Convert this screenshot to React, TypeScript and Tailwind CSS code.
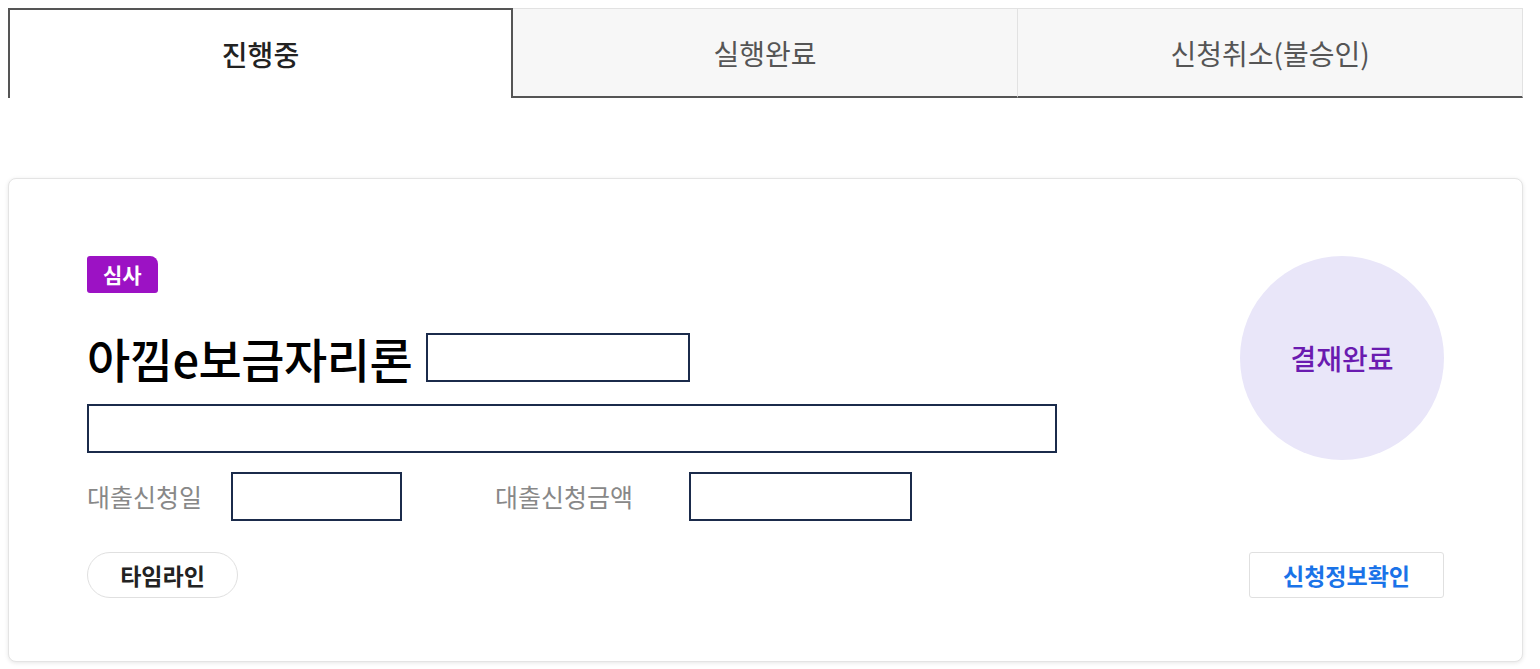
const font = "font-['Noto_Sans_CJK_KR','Noto_Sans',sans-serif]";

function Tabs() {
  return (
    <div className="grid grid-cols-3 h-[90px]">
      <div className="flex items-center justify-center border-2 border-b-0 border-[#555] bg-white text-[28px] font-medium text-[#222]">
        진행중
      </div>
      <div className="flex items-center justify-center border-t border-r border-[#e2e2e2] border-b-2 border-b-[#555] bg-[#f7f7f7] text-[28px] text-[#555]">
        실행완료
      </div>
      <div className="flex items-center justify-center border-t border-r border-[#e2e2e2] border-b-2 border-b-[#555] bg-[#f7f7f7] text-[28px] text-[#555]">
        신청취소(불승인)
      </div>
    </div>
  );
}

function Blank({ className }: { className: string }) {
  return <div className={`border-2 border-[#1b2b4b] bg-white ${className}`} />;
}

export default function App() {
  return (
    <div className={`${font} bg-white min-h-[669px] pl-2 pr-[17px] pt-2`}>
      <Tabs />

      <div className="mt-[80px] rounded-lg border border-[#e4e4e4] bg-white shadow-[0_1px_4px_rgba(0,0,0,0.10)] px-[78px] pt-[77px] pb-[63px]">
        <div className="flex justify-between">
          <div className="flex flex-col">
            <span className="self-start rounded-[3px] rounded-tr-lg bg-[#9c12c4] px-4 h-[37px] flex items-center text-[21px] font-bold text-white">
              심사
            </span>

            <div className="mt-[40px] flex items-center h-[49px] gap-[14px]">
              <h1 className="text-[47px] font-medium text-black leading-none tracking-[-0.5px]">
                아낌e보금자리론
              </h1>
              <Blank className="w-[264px] h-[49px]" />
            </div>

            <Blank className="mt-[22px] w-[970px] h-[49px]" />

            <div className="mt-[19px] flex items-center h-[49px] text-[25px] text-[#888]">
              <span className="w-[144px]">대출신청일</span>
              <Blank className="w-[171px] h-[49px]" />
              <span className="ml-[93px] w-[194px]">대출신청금액</span>
              <Blank className="w-[223px] h-[49px]" />
            </div>
          </div>

          <div className="w-[204px] h-[204px] rounded-full bg-[#e9e6f9] flex items-center justify-center text-[28px] font-medium text-[#6a1bb0]">
            결재완료
          </div>
        </div>

        <div className="mt-[31px] flex items-center justify-between">
          <button className="h-[46px] w-[151px] rounded-full border border-[#e0e0e0] bg-white text-[23px] font-bold text-[#222]">
            타임라인
          </button>
          <button className="h-[46px] w-[195px] rounded-[3px] border border-[#e0e0e0] bg-white text-[23px] font-bold text-[#1a73e8]">
            신청정보확인
          </button>
        </div>
      </div>
    </div>
  );
}
